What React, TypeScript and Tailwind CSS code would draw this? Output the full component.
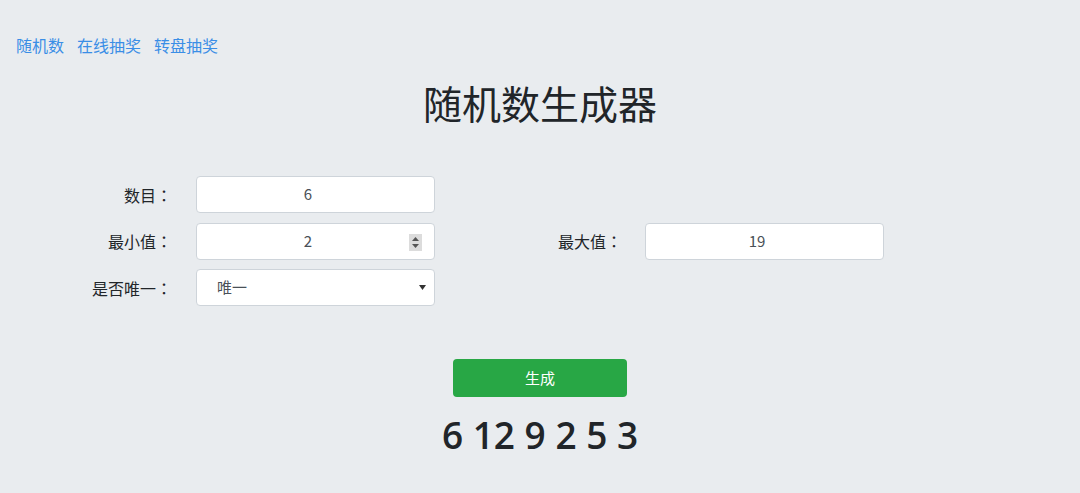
import React from "react";

const font = { fontFamily: '"Noto Sans CJK SC", "Noto Sans", sans-serif' };

function Label({ text, w }: { text: string; w: string }) {
  return (
    <div className={`${w} text-right text-[16px] text-[#212529] shrink-0`}>
      {text}
      <span style={{ fontFamily: '"Noto Sans CJK JP", sans-serif' }}>：</span>
    </div>
  );
}

function Field({ value, spinner }: { value: string; spinner?: boolean }) {
  return (
    <div className="relative w-[239px] h-[37px] shrink-0 bg-white border border-[#ced4da] rounded-[4px] flex items-center justify-center pl-3 pr-[27px] text-[15px] text-[#495057]">
      {value}
      {spinner && (
        <div className="absolute right-[12px] top-[10px] w-[13px] h-[17px] bg-[#dcdcdc] flex flex-col items-center justify-center gap-[3px]">
          <svg width="7" height="4" viewBox="0 0 7 4"><path d="M0 4 L3.5 0 L7 4 Z" fill="#555" /></svg>
          <svg width="7" height="4" viewBox="0 0 7 4"><path d="M0 0 L3.5 4 L7 0 Z" fill="#555" /></svg>
        </div>
      )}
    </div>
  );
}

export default function App() {
  return (
    <div className="w-full h-[493px] bg-[#e9ecef] overflow-hidden" style={font}>
      <nav className="pt-[34px] pl-[16px] flex gap-[13px] text-[16px] leading-[22px] text-[#3a8ee6]">
        <a>随机数</a>
        <a>在线抽奖</a>
        <a>转盘抽奖</a>
      </nav>
      <h1 className="mt-[23px] text-center text-[39px] leading-[47px] text-[#212529] font-normal">随机数生成器</h1>
      <div className="mt-[50px] flex flex-col gap-[9.5px]">
        <div className="flex items-center">
          <Label text="数目" w="w-[172px]" />
          <div className="w-[24px] shrink-0" />
          <Field value="6" />
        </div>
        <div className="flex items-center">
          <Label text="最小值" w="w-[172px]" />
          <div className="w-[24px] shrink-0" />
          <Field value="2" spinner />
          <Label text="最大值" w="w-[187px]" />
          <div className="w-[23px] shrink-0" />
          <Field value="19" />
        </div>
        <div className="flex items-center">
          <Label text="是否唯一" w="w-[172px]" />
          <div className="w-[24px] shrink-0" />
          <div className="w-[239px] h-[37px] shrink-0 bg-white border border-[#ced4da] rounded-[4px] flex items-center justify-between pl-[20px] pr-[8px] text-[15px] text-[#495057]">
            <span>唯一</span>
            <svg width="7" height="5" viewBox="0 0 7 5"><path d="M0 0 L3.5 5 L7 0 Z" fill="#333" /></svg>
          </div>
        </div>
      </div>
      <div className="mt-[53px] flex justify-center">
        <button className="w-[174px] h-[38px] bg-[#28a745] rounded-[4px] text-white text-[15px]">生成</button>
      </div>
      <div className="mt-[14px] text-center text-[37px] leading-[48px] font-semibold text-[#212529]" style={{ fontFamily: '"Open Sans", "Noto Sans", sans-serif' }}>
        6 12 9 2 5 3
      </div>
    </div>
  );
}
